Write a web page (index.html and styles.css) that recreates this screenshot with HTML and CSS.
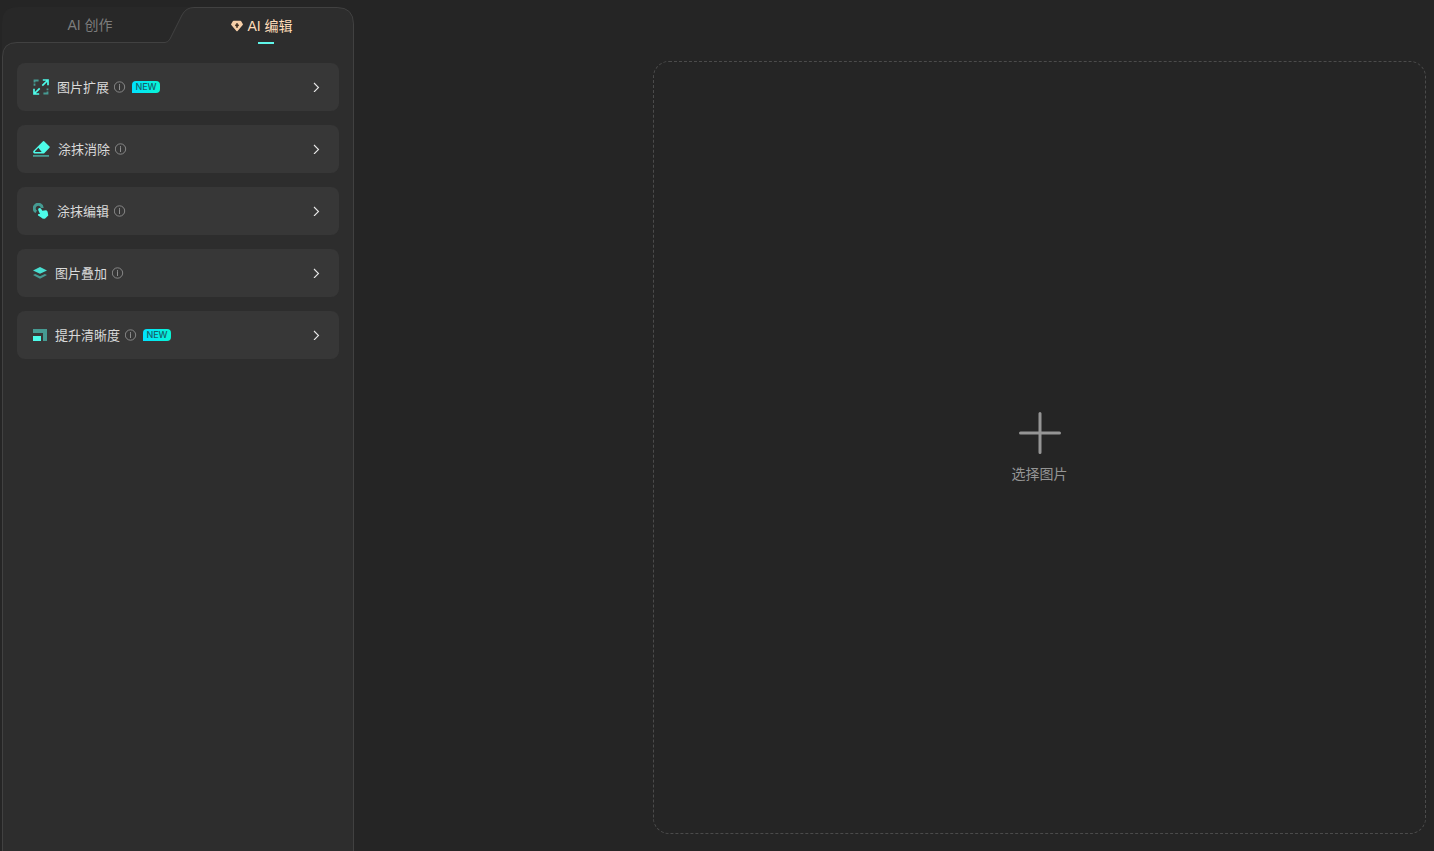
FILE: index.html
```
<!DOCTYPE html>
<html lang="zh-CN">
<head>
    <meta charset="UTF-8">
    <meta name="viewport" content="width=device-width, initial-scale=1.0">
    <title>AI 编辑</title>
    <link rel="stylesheet" href="styles.css">
</head>
<body>
    <svg class="symbols" aria-hidden="true">
        <symbol id="info" viewBox="0 0 12 12">
            <circle cx="5.5" cy="6" r="5.2" fill="none" stroke="currentColor" stroke-width="0.8"/>
            <path d="M5.5 4.2V9M5.5 3v0.9" stroke="currentColor" stroke-width="0.9"/>
        </symbol>
        <symbol id="chevron" viewBox="0 0 8 10">
            <path d="M1 1L5.5 5.5L1 10" fill="none" stroke="currentColor" stroke-width="1.1"/>
        </symbol>
    </svg>

    <aside class="sidebar">
        <div class="tabs" role="tablist">
            <svg class="tabs-shape" viewBox="0 0 352 54" aria-hidden="true">
                <path d="M0 54V16Q0 0 16 0H200V54Z" fill="#282828"/>
                <path d="M0.5 54V50Q0.5 35.5 15 35.5H163Q166 35.5 168 32L180 8Q184 0.5 192 0.5H335Q351.5 0.5 351.5 17V54" fill="#2d2d2d" stroke="#414141"/>
            </svg>
            <button class="tab" type="button" role="tab" aria-selected="false">AI 创作</button>
            <button class="tab active" type="button" role="tab" aria-selected="true">
                <svg width="12" height="12" viewBox="0 0 12 12" aria-hidden="true">
                    <path d="M2.6 0.8h6.8q.5 0 .8.4L11.8 4q.3.5-.1 1L6.6 11q-.6.7-1.2 0L.3 5q-.4-.5-.1-1l1.6-2.8q.3-.4.8-.4z" fill="#f6cfa8"/>
                    <path d="M6 3Q6.3 5 8 5.3Q6.3 5.6 6 8Q5.7 5.6 4 5.3Q5.7 5 6 3z" fill="#3a2a1c" stroke="#3a2a1c" stroke-width="0.6"/>
                </svg>
                <span>AI 编辑</span>
            </button>
        </div>

        <div class="panel">
            <button class="card" type="button">
                <svg width="16" height="16" viewBox="0 0 16 16" fill="none" aria-hidden="true">
                    <path d="M1.5 6.8V4.6M1.5 3.4V1.5H5.6M14.5 9.4V11.2M14.5 12.4V14.5H10.4" stroke="#469a92" stroke-width="1.8"/>
                    <path d="M9.3 6.7L15 1M9.8 1H15V6.2M6.7 9.3L1 15M1 9.8V15H6.2" stroke="#4dfbe9" stroke-width="1.7"/>
                </svg>
                <span class="card-title">图片扩展</span>
                <svg class="info" width="12" height="12"><use href="#info"/></svg>
                <span class="badge">NEW</span>
                <svg class="chevron" width="8" height="10"><use href="#chevron"/></svg>
            </button>

            <button class="card" type="button">
                <svg width="17" height="16" viewBox="0 0 17 16" aria-hidden="true">
                    <path d="M10 .3q.7-.5 1.4.1l5.1 5q.6.6 0 1.3L11 12.4H1.4Q0 12 .2 10.6Q.3 10 .8 9.5zM5.4 6.8L2 10.2q-.3.6.4.7h6.3z" fill="#4dfbe9" fill-rule="evenodd"/>
                    <path d="M0 14h16v1.8H0z" fill="#469a92"/>
                </svg>
                <span class="card-title">涂抹消除</span>
                <svg class="info" width="12" height="12"><use href="#info"/></svg>
                <svg class="chevron" width="8" height="10"><use href="#chevron"/></svg>
            </button>

            <button class="card" type="button">
                <svg width="16" height="16" viewBox="0 0 16 16" aria-hidden="true">
                    <path d="M3.3 8.8A4 4 0 1 1 9.2 5" fill="none" stroke="#469a92" stroke-width="3"/>
                    <path d="M5.2 6.9Q5 5.2 6.5 5Q7.7 4.9 8.3 6.1L9.3 7.7L13 7.2Q14.2 7.4 14.6 8.8L15.3 12.4L12.2 15.5Q10 16.4 8.2 14.6L5.1 12.6Q4.5 11.3 5.8 11L7 11.1z" fill="#4dfbe9"/>
                </svg>
                <span class="card-title">涂抹编辑</span>
                <svg class="info" width="12" height="12"><use href="#info"/></svg>
                <svg class="chevron" width="8" height="10"><use href="#chevron"/></svg>
            </button>

            <button class="card" type="button">
                <svg width="14" height="14" viewBox="0 0 14 14" aria-hidden="true">
                    <path d="M7 1L14 4.4L7 7.7L0 4.4z" fill="#48dfd1"/>
                    <path d="M0 9L2.2 8L7 10.3L11.8 8L14 9L7 12.8z" fill="#469a92"/>
                </svg>
                <span class="card-title">图片叠加</span>
                <svg class="info" width="12" height="12"><use href="#info"/></svg>
                <svg class="chevron" width="8" height="10"><use href="#chevron"/></svg>
            </button>

            <button class="card" type="button">
                <svg width="14" height="14" viewBox="0 0 14 14" aria-hidden="true">
                    <path d="M0 1h14v12h-4V5H0z" fill="#469a92"/>
                    <path d="M0 8h8v5H0z" fill="#4dfbe9"/>
                </svg>
                <span class="card-title">提升清晰度</span>
                <svg class="info" width="12" height="12"><use href="#info"/></svg>
                <span class="badge">NEW</span>
                <svg class="chevron" width="8" height="10"><use href="#chevron"/></svg>
            </button>
        </div>
    </aside>

    <main class="workspace">
        <button class="upload" type="button">
            <svg width="42" height="42" viewBox="0 0 42 42" aria-hidden="true">
                <path d="M21 1.5V40.5M1.5 21H40.5" stroke="currentColor" stroke-width="3" stroke-linecap="round"/>
            </svg>
            <span>选择图片</span>
        </button>
    </main>
</body>
</html>
```

FILE: styles.css
```
* {
    box-sizing: border-box;
}

body {
    font-family: "Liberation Sans", "Noto Sans CJK SC", sans-serif;
    margin: 0;
    display: flex;
    min-height: 100vh;
    background-color: #252525;
    color: #dadada;
}

button {
    font-family: inherit;
    color: inherit;
    background: none;
    border: none;
    padding: 0;
    cursor: pointer;
}

svg {
    flex-shrink: 0;
}

.symbols {
    position: absolute;
    width: 0;
    height: 0;
}

/* Sidebar */
.sidebar {
    display: flex;
    flex-direction: column;
    flex-shrink: 0;
    width: 352px;
    margin: 7px 0 0 2px;
}

.tabs {
    position: relative;
    display: flex;
    height: 54px;
    padding-bottom: 18px;
}

.tabs-shape {
    position: absolute;
    top: 0;
    left: 0;
    width: 100%;
    height: 100%;
}

.tab {
    position: relative;
    display: flex;
    width: 50%;
    align-items: center;
    justify-content: center;
    gap: 4px;
    font-size: 14px;
    line-height: 20px;
    color: #7d7d7d;
}

.tab.active {
    padding: 2px 8px 0 0;
    color: #ffdcb8;
}

.tab.active::after {
    content: "";
    position: absolute;
    bottom: -1px;
    left: 50%;
    width: 16px;
    height: 2px;
    margin-left: -8px;
    background-color: #5ff5e9;
}

.panel {
    display: flex;
    flex: 1;
    flex-direction: column;
    gap: 14px;
    padding: 2px 14px 14px;
    border: 1px solid #414141;
    border-width: 0 1px;
    background-color: #2d2d2d;
}

.card {
    display: flex;
    align-items: center;
    height: 48px;
    padding: 0 18px 0 16px;
    border-radius: 8px;
    background-color: #373737;
    font-size: 13px;
    line-height: 20px;
}

.card:hover {
    background-color: #3e3e3e;
}

.card-title {
    padding-top: 2px;
    margin: 0 5px 0 8px;
}

.info {
    color: #999;
}

.badge {
    width: 28px;
    height: 12px;
    margin-left: 6px;
    border-radius: 4px 4px 4px 0;
    background: linear-gradient(90deg, #00e1ff, #08f5d4);
    color: #16606a;
    font-family: Inter, "Liberation Sans", sans-serif;
    font-size: 9px;
    font-weight: 500;
    line-height: 12px;
    text-align: center;
}

.chevron {
    margin-left: auto;
    color: #e8e8e8;
}

/* Workspace */
.workspace {
    display: flex;
    flex: 1;
    justify-content: flex-end;
    padding: 61px 8px 17px;
}

.upload {
    display: flex;
    flex-direction: column;
    align-items: center;
    justify-content: center;
    gap: 10px;
    height: calc(100vh - 78px);
    aspect-ratio: 1;
    border: 1px dashed #4b4b4b;
    border-radius: 16px;
    color: #959595;
    font-size: 14px;
    line-height: 20px;
}
```
